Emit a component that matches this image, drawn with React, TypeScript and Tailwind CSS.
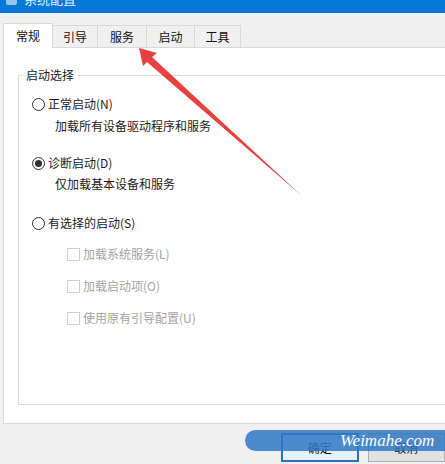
import type { ReactNode } from "react";

const FONT = { fontFamily: '"Microsoft YaHei", "Noto Sans CJK SC", "Noto Sans", sans-serif' };

const TABS = [
  { label: "常规", w: "w-[50px]" },
  { label: "引导", w: "w-[45px]" },
  { label: "服务", w: "w-[49px]" },
  { label: "启动", w: "w-[48px]" },
  { label: "工具", w: "w-[46px]" },
];

function Radio({ checked, children, className }: { checked?: boolean; children: ReactNode; className: string }) {
  return (
    <div className={`flex h-[20px] items-center pl-[13px] ${className}`}>
      <span className="flex h-[13px] w-[13px] shrink-0 items-center justify-center rounded-full border border-[#333] bg-white">
        {checked && <span className="h-[7px] w-[7px] rounded-full bg-[#333]" />}
      </span>
      <span className="ml-[3px] text-[12px] text-[#1a1a1a]">{children}</span>
    </div>
  );
}

function Check({ children, className }: { children: ReactNode; className: string }) {
  return (
    <div className={`flex h-[20px] items-center pl-[48px] ${className}`}>
      <span className="h-[13px] w-[13px] shrink-0 border border-[#cfcfcf] bg-white" />
      <span className="ml-[3px] text-[12px] text-[#a3a3a3]">{children}</span>
    </div>
  );
}

export default function App() {
  return (
    <div className="relative h-[464px] w-[445px] overflow-hidden bg-[#f0f0f0]" style={FONT}>
      {/* window caption, mostly scrolled off the top */}
      <div className="flex h-[13px] items-start overflow-hidden bg-[#0078d7] pl-[6px]">
        <div className="-mt-[10px] flex items-center gap-[7px]">
          <span className="h-[11px] w-[11px] rounded-[2px] bg-[#9fc3e6]" />
          <span className="text-[13px] leading-[18px] text-white/90">系统配置</span>
        </div>
      </div>

      {/* tab strip */}
      <div className="flex h-[34px] items-end pl-[3px] pt-[10px]">
        {TABS.map((t, i) =>
          i === 0 ? (
            <div
              key={t.label}
              className={`relative z-10 -mb-px flex h-[25px] ${t.w} items-center justify-center border border-b-0 border-[#d9d9d9] bg-white pb-px text-[12px] text-[#111]`}
            >
              {t.label}
            </div>
          ) : (
            <div
              key={t.label}
              className={`flex h-[22px] ${t.w} items-center justify-center border-r border-t border-[#d9d9d9] bg-[#f0f0f0] text-[12px] text-[#111]`}
            >
              {t.label}
            </div>
          )
        )}
      </div>

      {/* tab page */}
      <div className="ml-[3px] h-[377px] w-[470px] border border-[#d9d9d9] bg-white pl-[14px] pt-[27px]">
        <div className="relative h-[330px] border border-[#dcdcdc]">
          <span className="absolute -top-[10px] left-[4px] bg-white px-[3px] text-[12px] leading-[18px] text-[#1a1a1a]">
            启动选择
          </span>
          <div className="flex flex-col pt-[18px]">
            <Radio className="">正常启动(N)</Radio>
            <div className="mt-[2px] flex h-[20px] items-center pl-[36px] text-[12px] text-[#1a1a1a]">
              加载所有设备驱动程序和服务
            </div>
            <Radio checked className="mt-[17px]">
              诊断启动(D)
            </Radio>
            <div className="mt-[1px] flex h-[20px] items-center pl-[36px] text-[12px] text-[#1a1a1a]">
              仅加载基本设备和服务
            </div>
            <Radio className="mt-[19px]">有选择的启动(S)</Radio>
            <Check className="mt-[11px]">加载系统服务(L)</Check>
            <Check className="mt-[12px]">加载启动项(O)</Check>
            <Check className="mt-[12px]">使用原有引导配置(U)</Check>
          </div>
        </div>
      </div>

      {/* dialog buttons */}
      <div className="flex gap-[9px] pl-[281px] pt-[9px]">
        <button className="flex h-[29px] w-[86px] items-center justify-center border-2 border-[#2c70b8] bg-[#e5f1fb] text-[12px] text-[#111]">
          确定
        </button>
        <button className="flex h-[29px] w-[86px] items-center justify-center border border-[#adadad] bg-[#e1e1e1] text-[12px] text-[#111]">
          取消
        </button>
      </div>

      {/* site stamp over the buttons */}
      <div className="absolute left-[245px] top-[430px] flex h-[21px] w-[230px] items-center rounded-full bg-[#2f78c4]/85 pl-[95px]">
        <span
          className="text-[17px] italic leading-none text-white"
          style={{ fontFamily: '"Liberation Serif", "DejaVu Serif", serif' }}
        >
          Weimahe.com
        </span>
      </div>

      {/* red pointer arrow */}
      <svg className="pointer-events-none absolute left-0 top-0" width="445" height="464" viewBox="0 0 445 464">
        <polygon points="139,48 157,53 152,57 302,196 147,62 143,66" fill="#e8403f" />
      </svg>
    </div>
  );
}
